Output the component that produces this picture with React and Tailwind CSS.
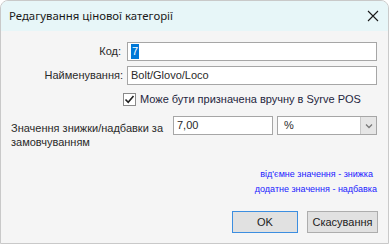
export default function App() {
  const label = { fontFamily: '"Liberation Sans", Arial, sans-serif' };
  return (
    <div className="w-[389px] h-[244px] overflow-hidden bg-white">
      <div className="w-[389px] h-[244px] flex flex-col rounded-t-[8px] border border-[#c9c9c9] overflow-hidden bg-[#f5f5f5]">
        <div className="h-[30px] shrink-0 bg-[#e7f6f8] flex items-center justify-between pl-[8px] pr-[8px]">
          <span className="text-[11.4px] text-[#1a1a1a]" style={{ fontFamily: '"Noto Sans", sans-serif' }}>
            Редагування цінової категорії
          </span>
          <svg width="12" height="12" viewBox="0 0 12 12" className="mr-[1px]">
            <path d="M1 1 L11 11 M11 1 L1 11" stroke="#1a1a1a" strokeWidth="1.1" fill="none" />
          </svg>
        </div>
        <div className="flex-1 flex flex-col pt-[11px] text-[11px] text-[#2a2a2a]" style={label}>
          <div className="flex items-center h-[19px]">
            <div className="w-[126px] text-right pr-[6px]">Код:</div>
            <div className="w-[250px] h-[19px] border border-[#a6a6a6] bg-white flex items-center pl-[3px]">
              <span className="bg-[#0078d7] text-white px-[1px] leading-[15px]">7</span>
            </div>
          </div>
          <div className="flex items-center h-[19px] mt-[5px]">
            <div className="w-[126px] text-right pr-[4px]">Найменування:</div>
            <div className="w-[250px] h-[19px] border border-[#a6a6a6] bg-white flex items-center pl-[3px]">
              Bolt/Glovo/Loco
            </div>
          </div>
          <div className="flex items-center h-[13px] mt-[8px] pl-[122px]">
            <div className="w-[13px] h-[13px] border border-[#8a8a8a] bg-white flex items-center justify-center">
              <svg width="11" height="11" viewBox="0 0 11 11">
                <path d="M1.5 5.5 L4.2 8.3 L9.5 2" stroke="#222" strokeWidth="1.6" fill="none" />
              </svg>
            </div>
            <span className="ml-[4px] text-[#1f2640]">Може бути призначена вручну в Syrve POS</span>
          </div>
          <div className="flex items-start mt-[10px]">
            <div className="w-[172px] pl-[10px] leading-[14px] pt-[5px]">
              Значення знижки/надбавки за замовчуванням
            </div>
            <div className="w-[100px] h-[19px] border border-[#a6a6a6] bg-white flex items-center pl-[3px]">
              7,00
            </div>
            <div className="w-[100px] h-[19px] ml-[4px] border border-[#a6a6a6] bg-white flex items-center">
              <span className="flex-1 pl-[6px]">%</span>
              <div className="w-[16px] h-full bg-[#e6e6e6] border-l border-[#c8c8c8] flex items-center justify-center">
                <svg width="8" height="6" viewBox="0 0 8 6">
                  <path d="M1 1.5 L4 4.5 L7 1.5" stroke="#7a7a7a" strokeWidth="1.3" fill="none" />
                </svg>
              </div>
            </div>
          </div>
          <div className="flex flex-col items-end pr-[11px] mt-[18px] text-[9px] text-[#1a1aff] leading-[15px]">
            <span className="pr-[4px]">від'ємне значення - знижка</span>
            <span>додатне значення - надбавка</span>
          </div>
          <div className="flex justify-end pr-[10px] mt-[14px] gap-[9px]">
            <button className="w-[66px] h-[22px] bg-[#e1e1e1] border border-[#3c8ee0] text-[11px] text-[#222]">OK</button>
            <button className="w-[71px] h-[22px] bg-[#e1e1e1] border border-[#adadad] text-[11px] text-[#222]">Скасування</button>
          </div>
        </div>
      </div>
    </div>
  );
}
